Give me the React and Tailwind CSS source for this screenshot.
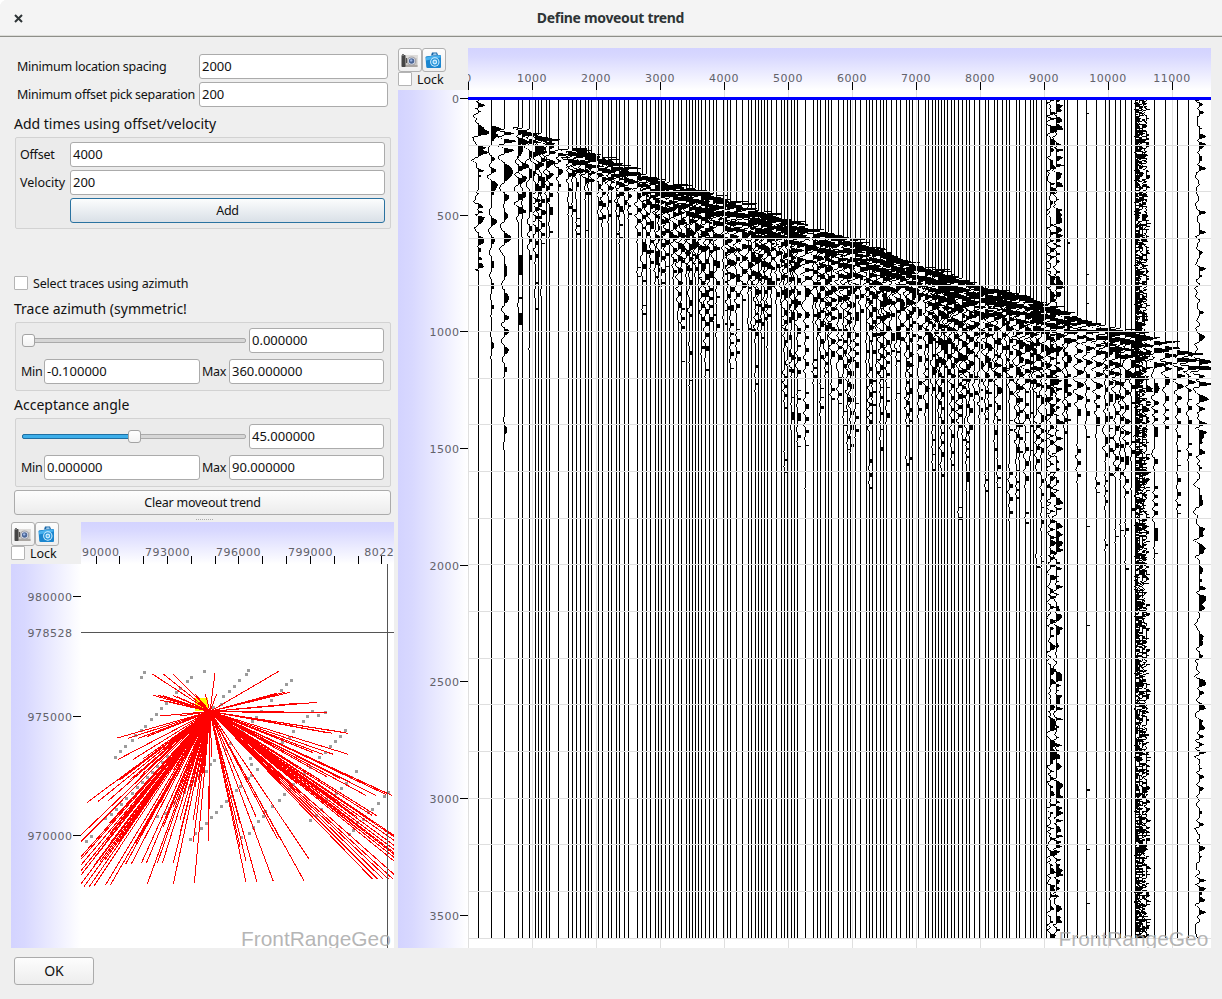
import React from "react";

const UI = "font-['Noto_Sans','Open_Sans',sans-serif]";

/* ---------- seismic section ---------- */

const TRACES = [
  478, 491, 504, 518, 522, 529, 535, 538, 541, 546, 549, 558, 568, 572, 576, 580, 585, 588, 591, 598,
  602, 608, 611, 616, 619, 624, 628, 637, 642, 646, 650, 655, 658, 661, 665, 669, 673, 678, 681, 686,
  689, 692, 695, 698, 701, 705, 709, 713, 716, 723, 727, 730, 736, 742, 748, 751, 755, 758, 761, 764,
  767, 771, 776, 781, 784, 787, 791, 794, 797, 805, 813, 817, 820, 825, 828, 831, 838, 843, 847, 850,
  855, 860, 866, 869, 872, 876, 880, 883, 886, 891, 896, 900, 906, 909, 912, 918, 925, 928, 932, 935,
  938, 941, 944, 947, 951, 954, 958, 962, 966, 969, 974, 979, 985, 988, 994, 997, 1002, 1006, 1009,
  1016, 1019, 1025, 1030, 1033, 1036, 1041, 1046, 1050, 1056, 1064, 1067, 1077, 1086, 1096, 1105,
  1109, 1115, 1120, 1125, 1131, 1135, 1139, 1142, 1146, 1154, 1165, 1177, 1188, 1199,
];

const FIRST_BREAK = [
  [478, 100], [491, 121], [504, 126], [522, 127], [541, 134], [558, 147], [580, 150], [608, 159],
  [637, 171], [660, 180], [693, 188], [723, 198], [747, 205], [788, 221], [827, 232], [873, 247],
  [917, 265], [960, 277], [980, 287], [1017, 293], [1040, 303], [1070, 313], [1097, 324],
  [1123, 328], [1147, 334], [1173, 346], [1207, 357],
];

function interp(table, x) {
  for (let i = 1; i < table.length; i++) {
    const [x1, y1] = table[i];
    if (x <= x1) {
      const [x0, y0] = table[i - 1];
      return y0 + ((y1 - y0) * (x - x0)) / (x1 - x0);
    }
  }
  return table[table.length - 1][1];
}

function rng(seed) {
  let s = (seed * 2654435761) >>> 0;
  return () => {
    s = (s + 0x6d2b79f5) >>> 0;
    let t = s;
    t = Math.imul(t ^ (t >>> 15), t | 1);
    t ^= t + Math.imul(t ^ (t >>> 7), t | 61);
    return ((t ^ (t >>> 14)) >>> 0) / 4294967296;
  };
}

/* smooth random series with knots every `step` rows */
function smooth(r, step) {
  const knots = Array.from({ length: Math.ceil(860 / step) + 3 }, () => r());
  return (y) => {
    const p = y / step;
    const i = Math.floor(p);
    const f = p - i;
    const g = f * f * (3 - 2 * f);
    return knots[i] * (1 - g) + knots[i + 1] * g;
  };
}

const TOP = 100;
const BOTTOM = 938;
const CODA = [[478, 130], [504, 160], [529, 100], [541, 65], [600, 38], [640, 52], [680, 68], [740, 84], [820, 96], [1040, 96], [1207, 98]];

function tracePath(x) {
  const r = rng(x);
  const t0 = interp(FIRST_BREAK, x) + (r() - 0.5) * 3;
  const length = interp(CODA, x) * (0.5 + r() * 0.9);
  const env = smooth(r, 20);
  const drift = smooth(r, 30);
  const wander = smooth(r, 9);
  const loud = x === 1050 || x === 1056 || x === 1199;
  const ringing = x > 1134 && x < 1147;
  const noise = smooth(r, ringing ? 1.5 : x === 1199 ? 4 : 2.6);
  const early = x < 500 ? 4 : x < 560 ? 9 : 14;
  const period = x < 530 ? 21 : 13.5;
  const offset = (y) => {
    const t = y - t0;
    let v = 0;
    if (t >= 0) {
      const width = x < 560 ? 13 : x < 650 ? 17 : 25;
      const pulse = Math.exp(-Math.pow(t / width, 2));
      v += early * pulse * Math.sin((2 * Math.PI * t) / 7.5 + 0.8 + drift(t) * 2 + wander(t) * 2.2) + (x < 560 ? 1 : 3) * pulse;
      const ramp = Math.min(1, t / 14);
      const coda = x < 640 && x > 545 ? 5 : 8.4;
      v += ramp * coda * Math.exp(-t / length) * (0.25 + 1.25 * env(t)) * Math.sin((2 * Math.PI * t) / period + drift(t) * 9);
    }
    const n = noise(y - TOP) - 0.5;
    if (loud) v += n * (x === 1199 ? 13 : 12) + (x === 1056 ? 0.8 : 0);
    if (x === 1135) v = Math.max(v, 0) * 0.6 + Math.abs(n) * 13;
    if (x === 1139) v = v * 0.5 + n * 11;
    if (x === 1142) v = v * 0.5 + n * 12 - 0.5;
    if (x === 1146) v = v * 0.5 + n * 9 - 0.8;
    if (x === 478 && y < 270) v += n * 11;
    if (x === 1086 && n > 0.45) v += 2;
    if ((x === 1154 || x === 1067) && n > 0.485) v += 2;
    if (Math.abs(v) < 1.35) return 0;
    if (t > 40 && v > 0 && !ringing && !loud && x > 510) v = Math.max(3, v);
    if (v < 0 && !ringing) v *= 0.72;
    return Math.round(Math.max(-12, Math.min(14, v)));
  };
  let d = "";
  let prev = 0;
  let zeroFrom = null;
  for (let y = TOP; y <= BOTTOM; y++) {
    const a = y === BOTTOM ? 99 : offset(y);
    if (a === 0 && prev === 0) {
      if (zeroFrom === null) zeroFrom = y;
      continue;
    }
    if (zeroFrom !== null) {
      d += `M${x} ${zeroFrom}h1V${y}h-1z`;
      zeroFrom = null;
    }
    if (a === 99) break;
    let lo = Math.min(a, 0);
    let hi = Math.max(a, 0);
    if (a < 0) hi = Math.max(a, Math.min(prev, 0) - 1);
    if (a === 0) lo = Math.min(0, prev + 1);
    d += `M${x + lo} ${y}h${hi - lo + 1}v1h${lo - hi - 1}z`;
    prev = a;
  }
  return d;
}

const PATHS = TRACES.map(tracePath);
const RULES = Array.from({ length: 18 }, (_, k) => Math.round(98.4 + 46.65 * (k + 1) - 0.5));
const COLS = Array.from({ length: 12 }, (_, k) => 468 + 64 * k);
const AXIS = "font-['DejaVu_Sans',sans-serif] text-[11px] tracking-[0.5px] fill-[#62626a]";

function Gradients({ id }) {
  return (
    <defs>
      <linearGradient id={`${id}-v`} x1="0" y1="0" x2="0" y2="1">
        <stop offset="0" stopColor="#d3d3ff" />
        <stop offset="0.2" stopColor="#d8d8ff" />
        <stop offset="1" stopColor="#fff" />
      </linearGradient>
      <linearGradient id={`${id}-h`} x1="0" y1="0" x2="1" y2="0">
        <stop offset="0" stopColor="#d3d3ff" />
        <stop offset="0.2" stopColor="#d8d8ff" />
        <stop offset="1" stopColor="#fff" />
      </linearGradient>
    </defs>
  );
}

function Section() {
  return (
    <svg className="block" width="813" height="900" viewBox="398 48 813 900">
      <Gradients id="sec" />
      <clipPath id="sec-clip"><rect x="468" y="48" width="743" height="900" /></clipPath>
      <path d="M398 90H468V48H1211V948H398Z" fill="#fff" />
      <rect x="468" y="48" width="743" height="42" fill="url(#sec-v)" />
      <rect x="398" y="90" width="70" height="858" fill="url(#sec-h)" />
      <g clipPath="url(#sec-clip)">
        {COLS.map((x, k) => (
          <text key={x} x={x} y="82" textAnchor="middle" className={AXIS}>{k * 1000}</text>
        ))}
      </g>
      {Array.from({ length: 8 }, (_, k) => (
        <text key={k} x="459.5" y={103 + Math.round(116.65 * k)} textAnchor="end" className={AXIS}>{k * 500}</text>
      ))}
      <g shapeRendering="crispEdges">
        {COLS.map((x) => <rect key={x} x={x} y="82" width="1" height="8" />)}
        {Array.from({ length: 8 }, (_, k) => (
          <rect key={k} x="460" y={98 + Math.round(116.65 * k)} width="8" height="1" />
        ))}
        <g fill="#000">{PATHS.map((d, i) => <path key={i} d={d} />)}</g>
        <g fill="#dfdfdf">
          {RULES.map((y) => <rect key={y} x="468" y={y} width="743" height="1" />)}
          {COLS.map((x) => <rect key={x} x={x} y="90" width="1" height="858" />)}
        </g>
        <rect x="468" y="97" width="743" height="3" fill="#0000ff" />
      </g>
      <text x="1058.5" y="946" className="font-['Liberation_Sans',sans-serif] text-[20.9px]" fill="#a8a8a8" fillOpacity="0.85">FrontRangeGeo</text>
    </svg>
  );
}

/* ---------- location map (coordinates in thirds of a pixel) ---------- */

const RAYS = [
  217,42, 250,42, 280,42, 345,102, 376,102, 405,40, 410,102, 596,34, 630,97, 615,97, 590,100, 710,127, 660,129,
  740,157, 740,158, 613,158, 220,106, 235,106, 250,107, 280,107, 292,110, 240,120, 265,124, 240,168, 300,168, 112,234, 145,235,
  175,235, 200,230, 115,298, 160,298, 190,296, 22,427, 55,424, 85,422, 115,360, 120,360, 150,360, 180,350, 150,424,
  3,525, 3,545, 3,590, 3,598, 3,615, 3,632, 3,645, 3,672, 12,680, 28,680, 42,678, 76,676, 91,676, 43,615, 60,605,
  75,600, 90,550, 105,550, 118,545, 75,550, 45,590, 137,612, 154,612, 184,610, 199,610, 232,610, 247,610, 280,610,
  202,672, 280,672, 343,670, 340,545, 385,543, 386,543, 395,290, 88,490, 100,480, 90,520, 166,550, 180,530, 150,430,
  160,415, 190,400, 200,420, 215,400, 340,480, 370,340, 363,340, 205,490, 168,548, 130,470, 235,300, 205,330, 250,500,
  300,480, 280,440, 240,430, 300,520, 260,470, 190,340, 310,400, 330,380, 280,330, 310,330, 345,380, 355,360,
  210,290, 225,280, 250,270, 270,250, 240,340, 260,320, 290,290, 320,270, 330,240, 350,230, 365,230, 376,230,
  498,603, 498,667, 480,560, 531,667, 580,664, 673,664, 688,598, 593,538, 603,540, 480,490, 460,470, 528,470,
  878,658, 893,658, 910,658, 925,657, 940,658, 942,643, 942,603, 942,592, 942,583, 942,578, 942,568, 942,556,
  942,541, 942,530, 942,526, 890,467, 876,466, 860,470, 845,462, 830,470, 815,460, 800,470, 860,520, 830,505,
  780,430, 790,470, 935,406, 923,401, 917,403, 887,406, 857,406, 800,345, 780,355, 805,283, 760,283, 728,283,
  700,278, 805,220, 790,217, 757,220, 742,218, 650,200, 720,400, 690,390, 700,430, 640,380, 650,370, 660,400,
  600,330, 620,320, 740,350, 720,360,
];

const STATIONS = [
  184,52, 193,37, 374,34, 322,64, 334,52, 301,85, 289,97, 259,130, 244,145, 229,163, 214,178, 196,199, 184,211, 167,226,
  157,241, 136,259, 121,274, 106,292, 505,31, 499,43, 478,61, 463,79, 448,94, 430,109, 424,133, 400,142, 634,61, 619,73,
  604,91, 574,121, 544,154, 529,172, 517,184, 487,211, 697,154, 715,166, 736,157, 682,169, 670,184, 640,214, 628,232,
  607,247, 796,211, 781,229, 766,244, 751,259, 736,278, 718,292, 691,322, 673,340, 451,250, 436,268, 421,283, 403,301,
  391,313, 379,334, 358,346, 343,364, 511,295, 514,313, 532,328, 514,346, 505,355, 481,379, 469,391, 454,409, 439,424,
  424,439, 409,457, 394,472, 379,490, 364,505, 346,520, 331,538, 829,334, 814,352, 799,370, 784,385, 769,400, 740,418,
  724,448, 709,466, 691,481, 640,373, 628,388, 613,403, 598,421, 577,439, 556,454, 550,469, 535,484, 520,502, 508,520,
  485,532, 925,397, 913,409, 895,430, 877,448, 865,457, 850,478, 832,487, 820,511, 808,523, 232,469, 255,460, 268,445,
  283,427, 298,412, 313,397, 328,382, 34,529, 19,544, 76,475, 94,463, 109,448, 124,433, 139,415, 157,400, 172,382,
  187,367, 202,352, 217,337, 232,320, 247,308, 262,290,
];

const pairs = (list) => Array.from({ length: list.length / 2 }, (_, i) => [80 + list[2 * i] / 3, 660 + list[2 * i + 1] / 3]);

function LocationMap() {
  return (
    <svg className="block" width="383" height="426" viewBox="11 522 383 426">
      <Gradients id="map" />
      <clipPath id="map-clip"><rect x="81" y="522" width="313" height="426" /></clipPath>
      <path d="M11 564H81V522H394V948H11Z" fill="#fff" />
      <rect x="81" y="522" width="313" height="42" fill="url(#map-v)" />
      <rect x="11" y="564" width="70" height="384" fill="url(#map-h)" />
      <g clipPath="url(#map-clip)">
        {[[97, "790000"], [167.5, "793000"], [238.5, "796000"], [310.5, "799000"]].map(([x, t]) => (
          <text key={t} x={x} y="556" textAnchor="middle" className={AXIS}>{t}</text>
        ))}
        <text x="364.3" y="556" className={AXIS}>8022</text>
        <g shapeRendering="crispEdges">
          {[96, 119, 143, 167, 191, 215, 238, 262, 286, 310, 334, 358, 381].map((x) => (
            <rect key={x} x={x} y="556" width="1" height="8" />
          ))}
          {pairs(STATIONS).map(([x, y], i) => (
            <rect key={i} x={Math.round(x - 1.5)} y={Math.round(y - 1.5)} width="3" height="3" fill="#9b9b9b" />
          ))}
          <rect x="195" y="698" width="13" height="13" fill="#ffff00" />
          <path d={pairs(RAYS).map(([x, y]) => `M210 711.5L${x.toFixed(1)} ${y.toFixed(1)}`).join("")} stroke="#ff0000" strokeWidth="1" fill="none" />
          <rect x="81" y="632" width="313" height="1" fill="#555" />
          <rect x="387" y="564" width="1" height="384" fill="#555" />
        </g>
        <text x="241" y="946" className="font-['Liberation_Sans',sans-serif] text-[20.9px]" fill="#a8a8a8" fillOpacity="0.85">FrontRangeGeo</text>
      </g>
      {[[596, "980000"], [632, "978528"], [716, "975000"], [835, "970000"]].map(([y, t]) => (
        <g key={t}>
          <text x="72.5" y={y + 5} textAnchor="end" className={AXIS}>{t}</text>
          {y !== 632 && <rect x="73" y={y} width="8" height="1" shapeRendering="crispEdges" />}
        </g>
      ))}
    </svg>
  );
}

/* ---------- widgets ---------- */

const LABEL = "text-[12.5px] tracking-[-0.24px] leading-[15px] text-[#111]";

function Field({ value, className }) {
  return (
    <div className={`flex h-[25px] items-center rounded-[3px] border border-[#ababab] bg-white pl-[2px] text-[13px] leading-none tracking-[0px] text-[#111] ${className}`}>
      {value}
    </div>
  );
}

function Heading({ children, className }) {
  return <div className={`pl-[14px] text-[14px] leading-[20px] text-[#111] ${className}`}>{children}</div>;
}

const GROUP = "ml-[15px] w-[376px] rounded-[2px] border border-[#d2d2d2] bg-[#ebebeb]";

function Slider({ percent }) {
  return (
    <div className="relative h-[14px] w-[224px]">
      <div className="absolute top-[4px] h-[5px] w-full rounded-[2px] border border-[#aaa] bg-[#d6d6d6]" />
      {percent > 0 && <div className="absolute top-[4px] h-[5px] w-[112px] rounded-[2px] border border-[#1f6fa3] bg-[#3daee9]" />}
      <div
        className="absolute top-0 h-[13px] w-[13px] rounded-[3px] border border-[#a3a3a3] bg-gradient-to-b from-white to-[#f3f3f3]"
        style={{ left: `${percent * 2.12}px` }}
      />
    </div>
  );
}

function AngleGroup({ value, min, max, percent, className }) {
  return (
    <div className={`${GROUP} h-[69px] pt-[5px] ${className}`}>
      <div className="flex items-center pl-[6px]">
        <Slider percent={percent} />
        <Field value={value} className="ml-[3px] w-[135px]" />
      </div>
      <div className={`mt-[6px] flex items-center pl-[5px] ${LABEL}`}>
        <span className="w-[23px]">Min</span>
        <Field value={min} className="w-[156px]" />
        <span className="ml-[2px] w-[27px]">Max</span>
        <Field value={max} className="w-[155px]" />
      </div>
    </div>
  );
}

function GreyCamera() {
  return (
    <svg className="mr-[2px]" width="17" height="15" viewBox="0 0 17 15">
      <rect x="4" y="2" width="12.5" height="12" fill="#c9c7c4" />
      <rect x="4" y="2" width="12.5" height="3" fill="#dedcda" />
      <rect x="4" y="12" width="12.5" height="2" fill="#aaa6a2" />
      <rect x="0.5" y="2" width="4" height="12" rx="0.8" fill="#454545" />
      <rect x="1" y="1" width="2" height="2" fill="#777" />
      <rect x="5" y="5" width="1" height="5" fill="#55534f" />
      <circle cx="10.6" cy="8" r="4.6" fill="#a2a2a6" />
      <circle cx="10.6" cy="8" r="3.5" fill="#dfe3ee" />
      <circle cx="10.6" cy="8" r="2.7" fill="#4a6596" />
      <circle cx="10.2" cy="7.4" r="1.2" fill="#9fb9e6" />
    </svg>
  );
}

function BlueCamera() {
  return (
    <svg className="mr-[1px]" width="17" height="17" viewBox="0 0 17 17">
      <path d="M7 0.500h5l1.200 3h-7.200z" fill="#1566a8" />
      <path d="M8.500 1.500h2.800l.4 1.200h-3.600z" fill="#cfeaff" />
      <path d="M0.500 5.500Q0.500 4.500 1.500 4.300L15 3q1 0 1 1v11q0 1-1 1H2.500q-1 0-1.200-1z" fill="#1b86cf" />
      <path d="M1 5.500L6 4.200 15.500 3.500v2L1 8.500z" fill="#49b2ef" />
      <circle cx="9.800" cy="10" r="4.700" fill="#d5efff" />
      <circle cx="9.800" cy="10" r="3.700" fill="#2594da" />
      <circle cx="9.800" cy="10" r="2.400" fill="#d4efff" />
      <circle cx="9.800" cy="10" r="1.200" fill="#5ab4ea" />
    </svg>
  );
}

function ViewTools() {
  const btn = "flex h-[24px] w-[24px] items-center justify-center rounded-[3px] border border-[#b0b0b0] bg-gradient-to-b from-[#fdfdfd] to-[#efefef]";
  return (
    <div className="h-[42px] w-[70px]">
      <div className="flex">
        <div className={btn}><GreyCamera /></div>
        <div className={btn}><BlueCamera /></div>
      </div>
      <div className="flex">
        <div className="h-[14px] w-[14px] rounded-[1px] border border-[#b4b4b4] bg-white" />
        <span className="ml-[5px] text-[12.5px] leading-[15px] text-[#111]">Lock</span>
      </div>
    </div>
  );
}

/* The axis corner of each view is left bare by its drawing, and holds the tools. */
function View({ children, className }) {
  return (
    <div className={`grid ${className}`}>
      <div className="col-start-1 row-start-1">{children}</div>
      <div className="z-10 col-start-1 row-start-1 h-[42px] w-[70px]"><ViewTools /></div>
    </div>
  );
}

export default function App() {
  return (
    <div className={`h-[999px] w-[1222px] overflow-hidden bg-white ${UI}`}>
      <div className="flex h-full w-full flex-col overflow-hidden rounded-tl-[7px] bg-[#efefef]">
        <header className="flex h-[37px] shrink-0 items-center border-b border-[#8e8f89] bg-[#f4f4f4] shadow-[inset_0_-1px_0_#dcdcd8]">
          <div className="flex w-[36px] justify-center">
            <svg width="9" height="9" viewBox="0 0 9 9"><path d="M1 1l7 7M8 1L1 8" stroke="#2e3436" strokeWidth="2" /></svg>
          </div>
          <div className="flex-1 pr-[37px] text-center text-[14px] font-bold leading-none tracking-[-0.32px] text-[#2e3436]">Define moveout trend</div>
        </header>

        <main className="flex h-[911px] shrink-0">
          <section className="flex w-[398px] shrink-0 flex-col">
            <div className={`mt-[17px] flex flex-col gap-[3px] pl-[17px] ${LABEL}`}>
              <div className="flex items-center">
                <span className="w-[182px] shrink-0 whitespace-nowrap">Minimum location spacing</span>
                <Field value="2000" className="w-[189px]" />
              </div>
              <div className="flex items-center">
                <span className="w-[182px] shrink-0 whitespace-nowrap tracking-[-0.28px]">Minimum offset pick separation</span>
                <Field value="200" className="w-[189px]" />
              </div>
            </div>

            <Heading className="mt-[7px]">Add times using offset/velocity</Heading>
            <div className={`${GROUP} mt-[3px] flex h-[92px] flex-col gap-[3px] pl-[4px] pt-[4px] ${LABEL}`}>
              <div className="flex items-center">
                <span className="w-[50px]">Offset</span>
                <Field value="4000" className="w-[315px]" />
              </div>
              <div className="flex items-center">
                <span className="w-[50px] tracking-[0px]">Velocity</span>
                <Field value="200" className="w-[315px]" />
              </div>
              <button className="ml-[50px] h-[25px] w-[315px] rounded-[3px] border border-[#2a72a0] bg-gradient-to-b from-[#fcfdfd] to-[#d9e0e7]">Add</button>
            </div>

            <div className="mt-[47px] flex h-[14px] items-center pl-[14px]">
              <div className="h-[14px] w-[14px] rounded-[1px] border border-[#b4b4b4] bg-white" />
              <span className="ml-[5px] pt-px text-[12.5px] leading-[15px] tracking-[-0.18px] text-[#111]">Select traces using azimuth</span>
            </div>

            <Heading className="mt-[9px]">Trace azimuth (symmetric!</Heading>
            <AngleGroup className="mt-[3px]" value="0.000000" min="-0.100000" max="360.000000" percent={0} />
            <Heading className="mt-[4px]">Acceptance angle</Heading>
            <AngleGroup className="mt-[3px]" value="45.000000" min="0.000000" max="90.000000" percent={50} />

            <button className={`ml-[14px] mt-[3px] h-[25px] w-[377px] rounded-[3px] border border-[#ababab] bg-gradient-to-b from-[#fdfdfd] to-[#ececec] ${LABEL}`}>
              Clear moveout trend
            </button>
            <div className="ml-[196px] mt-[4px] h-px w-[17px] border-t border-dotted border-[#aaa]" />
            <View className="ml-[11px] mt-[2px] w-[383px]"><LocationMap /></View>
          </section>

          <section className="pt-[11px]">
            <View className="w-[813px]"><Section /></View>
          </section>
        </main>

        <footer className="pl-[14px] pt-[9px]">
          <button className="h-[28px] w-[80px] rounded-[3px] border border-[#ababab] bg-gradient-to-b from-[#fdfdfd] to-[#ededed] text-[14px] leading-none text-[#111]">OK</button>
        </footer>
      </div>
    </div>
  );
}
